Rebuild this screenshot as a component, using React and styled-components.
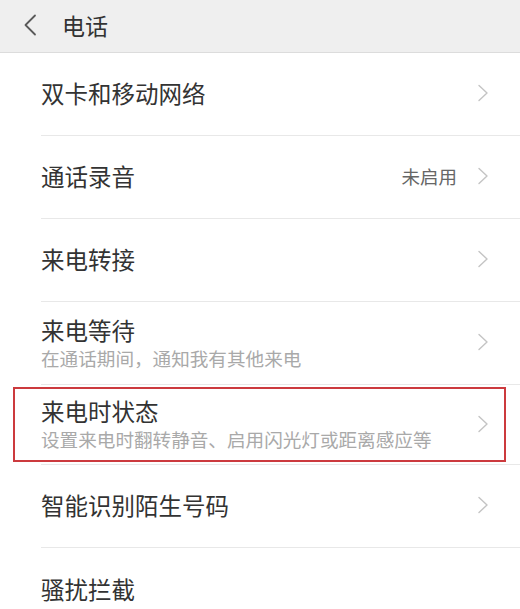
import React from "react";
import styled, { createGlobalStyle } from "styled-components";

const Global = createGlobalStyle`
  html, body { margin: 0; padding: 0; background: #ffffff; }
  body { font-family: "Noto Sans CJK SC", "Noto Sans", sans-serif; }
  * { box-sizing: border-box; }
`;

const Page = styled.div`
  width: 520px;
  height: 609px;
  overflow: hidden;
  background: #ffffff;
  display: flex;
  flex-direction: column;
`;

const Header = styled.header`
  height: 53px;
  flex: none;
  background: #efefef;
  border-bottom: 1px solid #dcdcdc;
  display: flex;
  align-items: center;
  padding-left: 23px;
`;

const BackButton = styled.span`
  width: 14px;
  height: 22px;
  display: flex;
  align-items: center;
  justify-content: center;
  margin-right: 25px;
  margin-top: -2px;
`;

const HeaderTitle = styled.h1`
  margin: 0;
  font-size: 23px;
  font-weight: 400;
  color: #333333;
  line-height: 30px;
  margin-top: -2px;
`;

const List = styled.div`
  display: flex;
  flex-direction: column;
`;

const Row = styled.div`
  position: relative;
  height: ${(p) => p.$h || 83}px;
  flex: none;
  margin-left: 41px;
  padding-right: 31px;
  border-bottom: ${(p) => (p.$last ? "none" : "1px solid #e8e8e8")};
  display: flex;
  align-items: center;
`;

const TextCol = styled.div`
  flex: 1;
  display: flex;
  flex-direction: column;
  min-width: 0;
`;

const Title = styled.div`
  font-size: 23.5px;
  line-height: 30px;
  color: #333333;
  margin-top: -2px;
`;

const Subtitle = styled.div`
  font-size: 18.6px;
  line-height: 24px;
  color: #a9a9a9;
  margin-top: 1px;
`;

const Value = styled.span`
  font-size: 18.5px;
  color: #666666;
  margin-right: 20px;
  margin-top: -2px;
`;

const Chevron = styled.svg`
  flex: none;
  width: 12px;
  height: 18px;
  margin-top: -2px;
`;

const Highlight = styled.div`
  position: absolute;
  left: -28px;
  right: 14px;
  top: 2px;
  bottom: 2px;
  border: 2px solid #cc3a3e;
  pointer-events: none;
`;

const ChevronIcon = () => (
  <Chevron viewBox="0 0 12 18">
    <path d="M2 1.5 L10 9 L2 16.5" fill="none" stroke="#c4c4c4" strokeWidth="1.4" strokeLinecap="round" strokeLinejoin="round" />
  </Chevron>
);

const items = [
  { title: "双卡和移动网络" },
  { title: "通话录音", value: "未启用" },
  { title: "来电转接" },
  { title: "来电等待", sub: "在通话期间，通知我有其他来电" },
  { title: "来电时状态", sub: "设置来电时翻转静音、启用闪光灯或距离感应等", highlight: true, h: 80 },
  { title: "智能识别陌生号码" },
  { title: "骚扰拦截", last: true },
];

export default function App() {
  return (
    <>
      <Global />
      <Page>
        <Header>
          <BackButton>
            <svg width="14" height="22" viewBox="0 0 14 22">
              <path d="M12 1.5 L2.5 11 L12 20.5" fill="none" stroke="#5a5a5a" strokeWidth="1.8" strokeLinecap="round" strokeLinejoin="round" />
            </svg>
          </BackButton>
          <HeaderTitle>电话</HeaderTitle>
        </Header>
        <List>
          {items.map((it) => (
            <Row key={it.title} $h={it.h} $last={it.last}>
              <TextCol>
                <Title>{it.title}</Title>
                {it.sub && <Subtitle>{it.sub}</Subtitle>}
              </TextCol>
              {it.value && <Value>{it.value}</Value>}
              {!it.last && <ChevronIcon />}
              {it.highlight && <Highlight />}
            </Row>
          ))}
        </List>
      </Page>
    </>
  );
}
